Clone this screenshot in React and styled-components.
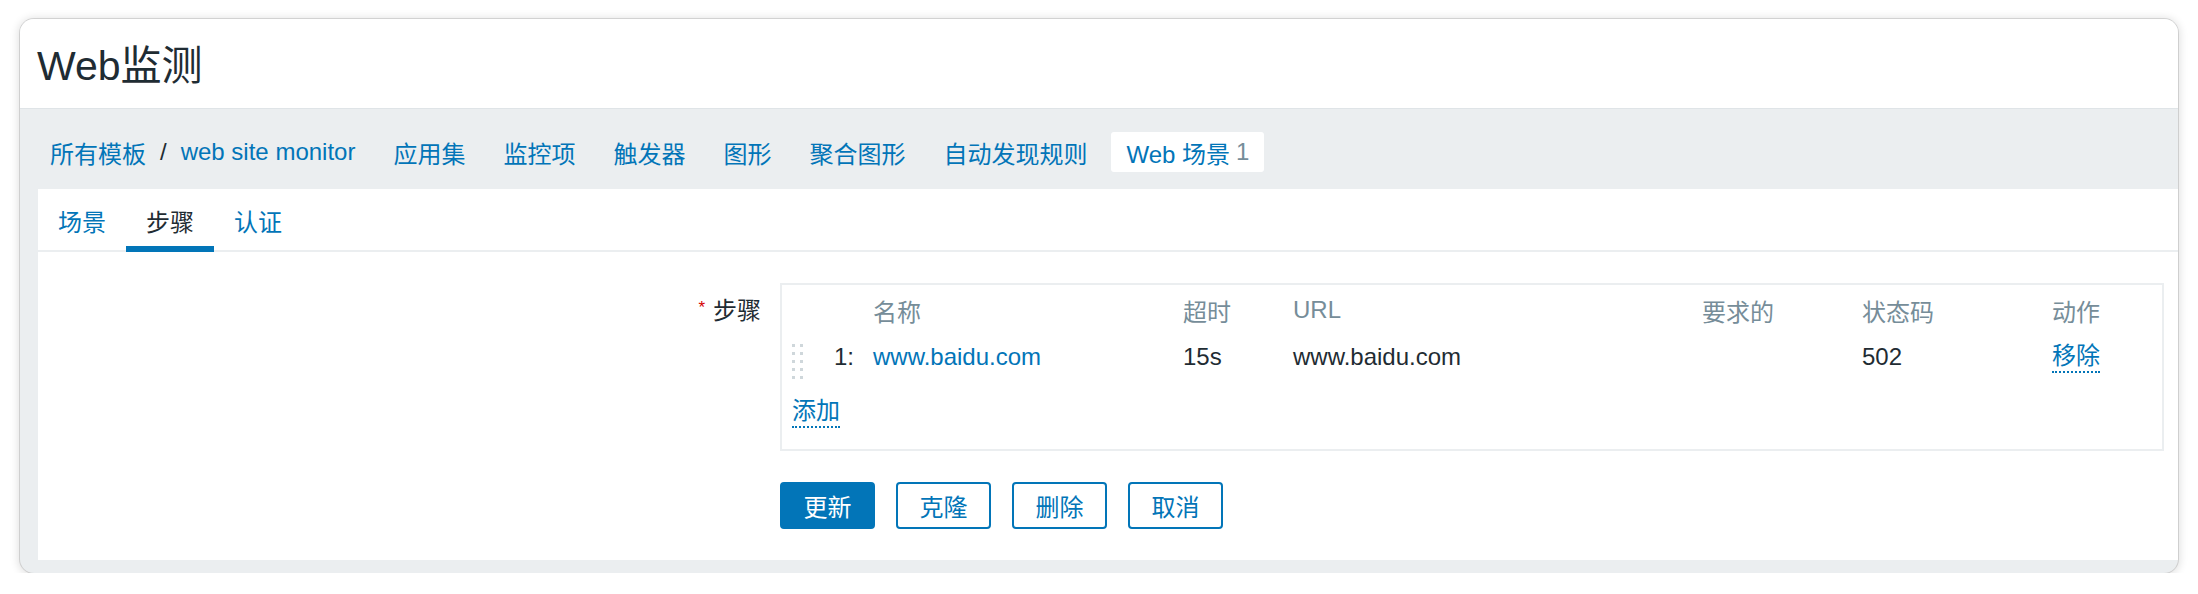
import React from 'react';
import styled, { createGlobalStyle } from 'styled-components';

const GlobalStyle = createGlobalStyle`
  html, body {
    margin: 0;
    padding: 0;
    background: #ffffff;
  }
  body {
    font-family: "Liberation Sans", "Noto Sans CJK SC", sans-serif;
    color: #1f2c33;
  }
`;

const Page = styled.div`
  padding: 19px 20px 0 20px;
`;

const Window = styled.div`
  width: 2158px;
  height: 554px;
  border-radius: 14px;
  overflow: hidden;
  background: #ebeef0;
  display: flex;
  flex-direction: column;
  box-shadow: 0 0 0 1px rgba(0, 0, 0, 0.12), 0 1px 8px 2px rgba(0, 0, 0, 0.12);
`;

const Header = styled.header`
  height: 90px;
  flex: none;
  box-sizing: border-box;
  background: #ffffff;
  border-bottom: 1px solid #dfe4e7;
  display: flex;
  align-items: center;
  padding: 0 0 4px 17px;
`;

const Title = styled.h1`
  margin: 0;
  font-size: 41px;
  font-weight: normal;
  color: #1f2c33;
`;

const Nav = styled.nav`
  height: 80px;
  flex: none;
  box-sizing: border-box;
  display: flex;
  align-items: center;
  gap: 10px;
  padding: 6px 0 0 16px;
  font-size: 24px;
`;

const NavItem = styled.div`
  display: flex;
  align-items: center;
  height: 40px;
  padding: 0 ${p => (p.$selected ? 15 : 14)}px;
  border-radius: 3px;
  color: #0275b8;
  background: ${p => (p.$selected ? '#ffffff' : 'transparent')};
`;

const Slash = styled.span`
  color: #1f2c33;
  margin: 0 14px;
`;

const Counter = styled.span`
  color: #768d99;
  margin-left: 6px;
`;

const Content = styled.main`
  flex: 1;
  margin: 0 0 13px 18px;
  background: #ffffff;
  display: flex;
  flex-direction: column;
`;

const TabList = styled.div`
  height: 63px;
  box-sizing: border-box;
  border-bottom: 2px solid #ebeef0;
  display: flex;
`;

const Tab = styled.div`
  height: 63px;
  box-sizing: border-box;
  margin-bottom: -2px;
  padding: 6px 20px 0;
  display: flex;
  align-items: center;
  font-size: 24px;
  color: ${p => (p.$active ? '#1f2c33' : '#0275b8')};
  border-bottom: 6px solid ${p => (p.$active ? '#0275b8' : 'transparent')};
`;

const Form = styled.div`
  padding: 31px 14px 31px 0;
  display: grid;
  grid-template-columns: 723px 1fr;
  column-gap: 19px;
  row-gap: 31px;
`;

const Label = styled.div`
  text-align: right;
  font-size: 24px;
  line-height: 32px;
  padding-top: 9px;
`;

const Required = styled.span`
  color: #d40000;
  font-size: 17px;
  vertical-align: 6px;
  margin-right: 8px;
`;

const StepsBox = styled.div`
  height: 168px;
  box-sizing: border-box;
  border: 2px solid #ebeef0;
  padding: 2px 10px 6px;
`;

const Row = styled.div`
  display: grid;
  grid-template-columns: 30px 51px 310px 110px 409px 160px 190px 1fr;
  align-items: center;
  height: ${p => p.$h}px;
  font-size: 24px;
  color: ${p => (p.$head ? '#768d99' : '#1f2c33')};
`;

const Num = styled.div`
  text-align: right;
  padding-right: 19px;
`;

const Link = styled.span`
  color: #0275b8;
`;

const DottedLink = styled.span`
  display: inline-block;
  color: #0275b8;
  line-height: 30px;
  border-bottom: 2px dotted #0275b8;
`;

const AddCell = styled.div`
  grid-column: 1 / -1;
  padding-top: 2px;
`;

const Handle = styled.svg`
  margin-top: 10px;
  display: block;
`;

const Buttons = styled.div`
  grid-column: 2;
  display: flex;
  gap: 21px;
`;

const Button = styled.button`
  width: 95px;
  height: 47px;
  box-sizing: border-box;
  border: 2px solid #0275b8;
  border-radius: 4px;
  font-family: inherit;
  font-size: 24px;
  padding: 0;
  background: ${p => (p.$primary ? '#0275b8' : '#ffffff')};
  color: ${p => (p.$primary ? '#ffffff' : '#0275b8')};
`;

function DragHandle() {
  const dots = [];
  for (let r = 0; r < 5; r++) {
    for (let c = 0; c < 2; c++) {
      dots.push(<rect key={`${r}-${c}`} x={c * 8} y={r * 8} width="3" height="3" fill="#cfd7db" />);
    }
  }
  return (
    <Handle width="12" height="36" viewBox="0 0 12 36">
      {dots}
    </Handle>
  );
}

export default function App() {
  return (
    <Page>
      <GlobalStyle />
      <Window>
        <Header>
          <Title>Web监测</Title>
        </Header>
        <Nav>
          <NavItem>
            所有模板<Slash>/</Slash>web site monitor
          </NavItem>
          <NavItem>应用集</NavItem>
          <NavItem>监控项</NavItem>
          <NavItem>触发器</NavItem>
          <NavItem>图形</NavItem>
          <NavItem>聚合图形</NavItem>
          <NavItem>自动发现规则</NavItem>
          <NavItem $selected>
            Web 场景<Counter>1</Counter>
          </NavItem>
        </Nav>
        <Content>
          <TabList>
            <Tab>场景</Tab>
            <Tab $active>步骤</Tab>
            <Tab>认证</Tab>
          </TabList>
          <Form>
            <Label>
              <Required>*</Required>步骤
            </Label>
            <StepsBox>
              <Row $head $h={46}>
                <div />
                <div />
                <div>名称</div>
                <div>超时</div>
                <div>URL</div>
                <div>要求的</div>
                <div>状态码</div>
                <div>动作</div>
              </Row>
              <Row $h={48}>
                <DragHandle />
                <Num>1:</Num>
                <Link>www.baidu.com</Link>
                <div>15s</div>
                <div>www.baidu.com</div>
                <div />
                <div>502</div>
                <div>
                  <DottedLink>移除</DottedLink>
                </div>
              </Row>
              <Row $h={60}>
                <AddCell>
                  <DottedLink>添加</DottedLink>
                </AddCell>
              </Row>
            </StepsBox>
            <Buttons>
              <Button $primary>更新</Button>
              <Button>克隆</Button>
              <Button>删除</Button>
              <Button>取消</Button>
            </Buttons>
          </Form>
        </Content>
      </Window>
    </Page>
  );
}
